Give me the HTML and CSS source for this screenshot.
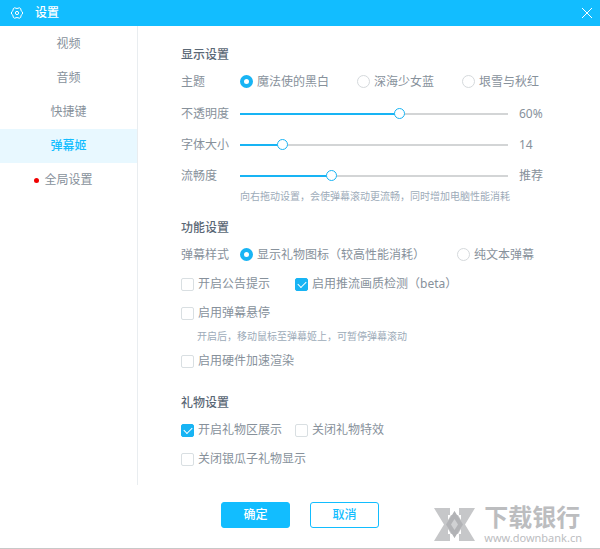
FILE: index.html
```html
<!DOCTYPE html>
<html lang="zh-CN">

<head>
    <meta charset="UTF-8">
    <meta name="viewport" content="width=device-width, initial-scale=1.0">
    <title>设置</title>
    <link rel="stylesheet" href="styles.css">
</head>

<body>
    <header class="titlebar">
        <svg class="gear" viewBox="0 0 12 12" fill="none" stroke="#fff">
            <path d="M3.500 .8 Q6 2.200 8.500 .8 L9.700 1.600 Q9.600 4.200 11.500 5 V7 Q9.600 7.800 9.700 10.400 L8.500 11.200 Q6 9.800 3.500 11.200 L2.300 10.400 Q2.400 7.800 .5 7 V5 Q2.400 4.200 2.300 1.600 Z" />
            <circle cx="6" cy="6" r="1.6" />
        </svg>
        <h1>设置</h1>
        <button class="close" type="button" aria-label="关闭">
            <svg viewBox="0 0 10 10" stroke="#fff" fill="none">
                <path d="M0 0 L10 10 M10 0 L0 10" />
            </svg>
        </button>
    </header>
    <form class="window">
        <div class="body">
            <nav class="menu">
                <a href="#">视频</a>
                <a href="#">音频</a>
                <a href="#">快捷键</a>
                <a href="#" class="current">弹幕姬</a>
                <a href="#" class="new"><span class="dot"></span>全局设置</a>
            </nav>
            <main class="main">
                <section class="group">
                    <h2>显示设置</h2>
                    <div class="radios" role="radiogroup" aria-label="主题">
                        <span class="name">主题</span>
                        <label><input type="radio" name="theme" checked>魔法使的黑白</label>
                        <label><input type="radio" name="theme">深海少女蓝</label>
                        <label><input type="radio" name="theme">垠雪与秋红</label>
                    </div>
                    <div class="slider">
                        <label class="name" for="opacity">不透明度</label>
                        <input type="range" id="opacity" min="0" max="100" value="60" style="--p: 60%">
                        <output for="opacity">60%</output>
                    </div>
                    <div class="slider">
                        <label class="name" for="size">字体大小</label>
                        <input type="range" id="size" min="12" max="26" value="14" style="--p: 15%">
                        <output for="size">14</output>
                    </div>
                    <div class="slider">
                        <label class="name" for="smooth">流畅度</label>
                        <input type="range" id="smooth" min="0" max="3" value="1" style="--p: 34%">
                        <output for="smooth">推荐</output>
                    </div>
                    <p class="tip">向右拖动设置，会使弹幕滚动更流畅，同时增加电脑性能消耗</p>
                </section>
                <section class="group">
                    <h2>功能设置</h2>
                    <div class="radios wide" role="radiogroup" aria-label="弹幕样式">
                        <span class="name">弹幕样式</span>
                        <label><input type="radio" name="style" checked>显示礼物图标（较高性能消耗）</label>
                        <label><input type="radio" name="style">纯文本弹幕</label>
                    </div>
                    <div class="checks">
                        <label><input type="checkbox">开启公告提示</label>
                        <label><input type="checkbox" checked>启用推流画质检测（beta）</label>
                    </div>
                    <div class="checks">
                        <label><input type="checkbox">启用弹幕悬停</label>
                    </div>
                    <p class="tip indent">开启后，移动鼠标至弹幕姬上，可暂停弹幕滚动</p>
                    <div class="checks">
                        <label><input type="checkbox">启用硬件加速渲染</label>
                    </div>
                </section>
                <section class="group">
                    <h2>礼物设置</h2>
                    <div class="checks">
                        <label><input type="checkbox" checked>开启礼物区展示</label>
                        <label><input type="checkbox">关闭礼物特效</label>
                    </div>
                    <div class="checks">
                        <label><input type="checkbox">关闭银瓜子礼物显示</label>
                    </div>
                </section>
            </main>
        </div>
        <footer class="footer">
            <button class="btn ok" type="submit">确定</button>
            <button class="btn" type="button">取消</button>
            <div class="mark">
                <svg viewBox="0 0 41 33">
                    <path fill="#c6c7c9" d="M0 0 H16 V7 H19 L20.500 3 L22 7 H25 V0 H41 L31 16.500 L41 33 H25 V26 H22 L20.500 30 L19 26 H16 V33 H0 L10 16.500 Z" />
                    <path fill="#b2b3b6" d="M20.500 3 L29 16.500 L20.500 30 L12 16.500 Z" />
                    <path fill="#fff" d="M14 7 H17 L14 12 Z M27 7 H24 L27 12 Z M14 26 H17 L14 21 Z M27 26 H24 L27 21 Z" />
                    <path fill="#d0d1d3" d="M20.500 11 L24 16.500 L20.500 22 L17 16.500 Z" />
                </svg>
                <div>
                    <strong>下载银行</strong>
                    <span>www.downbank.cn</span>
                </div>
            </div>
        </footer>
    </form>
</body>

</html>
```
FILE: styles.css
```css
* {
    margin: 0;
    padding: 0;
    box-sizing: border-box;
}

body {
    display: flex;
    flex-direction: column;
    min-height: 100vh;
    font: 12px/20px "Noto Sans", "Noto Sans CJK SC", sans-serif;
    color: #87919b;
    background-color: #fff;
    border-bottom: 1px solid #c8c8c8;
}

button,
input {
    font: inherit;
}

/* 标题栏 */
.titlebar {
    display: flex;
    align-items: center;
    height: 26px;
    padding: 0 8px 0 11px;
    background-color: #12bdff;
    color: #fff;
}

.titlebar h1 {
    flex: 1;
    margin-left: 12px;
    font-size: 12px;
    font-weight: 500;
}

.gear {
    width: 12px;
    height: 12px;
}

.close {
    display: flex;
    border: 0;
    background: none;
    cursor: pointer;
}

.close svg {
    width: 10px;
    height: 10px;
}

.window {
    flex: 1;
    display: flex;
    flex-direction: column;
}

.body {
    flex: 1;
    display: flex;
}

/* 左侧菜单 */
.menu {
    width: 138px;
    padding-top: 1px;
    border-right: 1px solid #e9edf0;
}

.menu a {
    display: flex;
    align-items: center;
    justify-content: center;
    height: 34px;
    color: #87919b;
    text-decoration: none;
}

.menu .current {
    background-color: #e8f8ff;
    color: #12bdff;
    font-weight: 500;
}

.menu .new {
    padding-right: 10px;
}

.dot {
    width: 5px;
    height: 5px;
    margin-right: 5px;
    border-radius: 50%;
    background-color: #f00000;
}

/* 右侧内容 */
.main {
    flex: 1;
    padding: 3px 0 4px 43px;
}

.group {
    padding-top: 16px;
}

.group h2 {
    font-size: 12px;
    font-weight: 500;
    color: #5b6876;
}

.name {
    width: 59px;
}

.radios,
.slider,
.checks,
.radios label,
.checks label {
    display: flex;
    align-items: center;
}

.radios {
    height: 33px;
    white-space: nowrap;
}

.radios label {
    margin-right: 28px;
}

.radios.wide label {
    margin-right: 32px;
}

input[type="radio"] {
    appearance: none;
    width: 13px;
    height: 13px;
    margin-right: 4px;
    border: 1px solid #d5d9dc;
    border-radius: 50%;
}

input[type="radio"]:checked {
    border: 4px solid #18b4f4;
}

.slider {
    height: 31px;
}

.slider output {
    width: 92px;
    padding-left: 11px;
}

input[type="range"] {
    appearance: none;
    flex: 1;
    min-width: 0;
    height: 12px;
    background: linear-gradient(#18b4f4, #18b4f4) left center / var(--p) 2px no-repeat,
        linear-gradient(#d3d5d6, #d3d5d6) center / 100% 2px no-repeat;
}

input[type="range"]::-webkit-slider-thumb {
    appearance: none;
    width: 11px;
    height: 11px;
    border: 1px solid #18b4f4;
    border-radius: 50%;
    background-color: #fff;
}

.tip {
    padding-left: 59px;
    font-size: 10px;
    line-height: 11px;
    color: #9dabb9;
}

.indent {
    padding: 2px 0 6px 16px;
}

.checks {
    height: 26px;
    margin-bottom: 3px;
}

h2 + .checks {
    margin-top: 4px;
}

.checks label {
    min-width: 114px;
}

input[type="checkbox"] {
    appearance: none;
    width: 13px;
    height: 13px;
    margin-right: 4px;
    border: 1px solid #d9dfe2;
    border-radius: 2px;
}

input[type="checkbox"]:checked {
    border-color: #18b4f4;
    background-color: #18b4f4;
}

input[type="checkbox"]:checked::before {
    content: "";
    display: block;
    width: 7px;
    height: 4px;
    margin: 2px;
    border: solid #fff;
    border-width: 0 0 1px 1px;
    transform: rotate(-45deg);
}

/* 底部按钮 */
.footer {
    position: relative;
    display: flex;
    justify-content: center;
    gap: 20px;
    padding: 17px 0 20px;
}

.btn {
    width: 69px;
    height: 26px;
    border: 1px solid #12bdff;
    border-radius: 3px;
    background-color: #fff;
    color: #12bdff;
    font-weight: 500;
    cursor: pointer;
}

.ok {
    background-color: #12bdff;
    color: #fff;
}

.mark {
    position: absolute;
    right: 18px;
    bottom: 3px;
    display: flex;
    align-items: center;
    gap: 9px;
    color: #bcbdbf;
}

.mark svg {
    width: 41px;
    height: 33px;
}

.mark strong,
.mark span {
    display: block;
}

.mark strong {
    font-size: 24px;
    line-height: 28px;
}

.mark span {
    font-size: 11px;
    line-height: 14px;
}
```
